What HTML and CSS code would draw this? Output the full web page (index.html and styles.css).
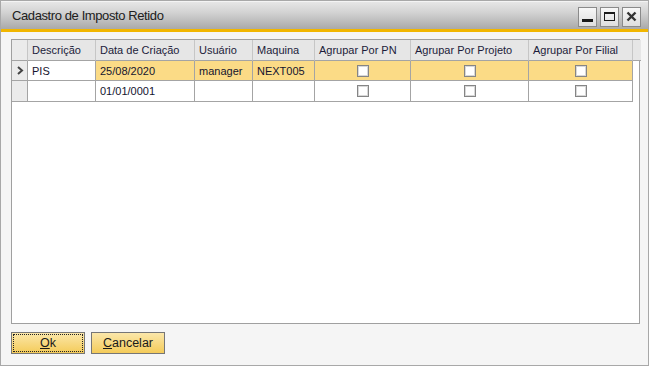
FILE: index.html
```html
<!DOCTYPE html>
<html lang="pt">
<head>
<meta charset="utf-8">
<title>Cadastro de Imposto Retido</title>
<link rel="stylesheet" href="styles.css">
</head>
<body>
<div class="window">
  <div class="titlebar">
    <span class="title">Cadastro de Imposto Retido</span>
    <div class="controls">
      <span class="ctl"><svg width="13" height="13" viewBox="0 0 13 13"><rect x="1" y="9" width="11" height="3" fill="#1a1a1a"/></svg></span>
      <span class="ctl"><svg width="13" height="13" viewBox="0 0 13 13"><rect x="1.5" y="2.5" width="10" height="8" fill="none" stroke="#1a1a1a"/><rect x="1" y="2" width="11" height="2" fill="#1a1a1a"/></svg></span>
      <span class="ctl"><svg width="13" height="13" viewBox="0 0 13 13"><path d="M2.5 2.5 L10.5 10.5 M10.5 2.5 L2.5 10.5" stroke="#333" stroke-width="2.4"/></svg></span>
    </div>
  </div>
  <div class="body">
    <div class="grid">
      <div class="row head">
        <div class="cell rh"></div>
        <div class="cell">Descrição</div>
        <div class="cell">Data de Criação</div>
        <div class="cell">Usuário</div>
        <div class="cell">Maquina</div>
        <div class="cell">Agrupar Por PN</div>
        <div class="cell">Agrupar Por Projeto</div>
        <div class="cell">Agrupar Por Filial</div>
        <div class="cell tail"></div>
      </div>
      <div class="row sel">
        <div class="cell rh"><svg width="8" height="9" viewBox="0 0 8 9"><path d="M2 1 L6 4.5 L2 8" fill="none" stroke="#444" stroke-width="2"/></svg></div>
        <div class="cell white">PIS</div>
        <div class="cell">25/08/2020</div>
        <div class="cell">manager</div>
        <div class="cell">NEXT005</div>
        <div class="cell chk"><span class="box"></span></div>
        <div class="cell chk"><span class="box"></span></div>
        <div class="cell chk"><span class="box"></span></div>
      </div>
      <div class="row">
        <div class="cell rh"></div>
        <div class="cell"></div>
        <div class="cell">01/01/0001</div>
        <div class="cell"></div>
        <div class="cell"></div>
        <div class="cell chk"><span class="box"></span></div>
        <div class="cell chk"><span class="box"></span></div>
        <div class="cell chk"><span class="box"></span></div>
      </div>
    </div>
    <div class="actions">
      <button class="btn focus"><span class="focusring"><u>O</u>k</span></button>
      <button class="btn"><span class="focusring none"><u>C</u>ancelar</span></button>
    </div>
  </div>
</div>
</body>
</html>
```

FILE: styles.css
```css
html, body {
  margin: 0;
  padding: 0;
  background: #ffffff;
}
body {
  font-family: "Liberation Sans", Arial, sans-serif;
  font-size: 12px;
  color: #1a1a1a;
}
.window {
  width: 649px;
  height: 366px;
  box-sizing: border-box;
  border: 1px solid #a8a8a8;
  background: #f5f5f5;
  display: flex;
  flex-direction: column;
  box-shadow: 0 2px 0 -1px #bdbdbd;
}
.titlebar {
  height: 27px;
  border-bottom: 3px solid #f1b600;
  background: linear-gradient(#e6e6e6, #d2d2d2 40%, #a9a9a9);
  display: flex;
  align-items: center;
  justify-content: space-between;
  padding: 0 7px 0 11px;
  border-top: 1px solid #f4f4f4;
}
.title {
  font-size: 13px;
  color: #202020;
  letter-spacing: -0.4px;
}
.controls {
  display: flex;
  gap: 3px;
  margin-top: 2px;
}
.ctl {
  width: 19px;
  height: 20px;
  box-sizing: border-box;
  border: 1px solid #8a8a8a;
  background: linear-gradient(#f7f7f7, #dedede);
  display: flex;
  align-items: center;
  justify-content: center;
}
.body {
  flex: 1;
  padding: 7px 9px 0 10px;
  display: flex;
  flex-direction: column;
}
.grid {
  width: 629px;
  height: 285px;
  box-sizing: border-box;
  border: 1px solid #a0a0a0;
  background: #ffffff;
}
.row {
  display: grid;
  grid-template-columns: 16px 68px 99px 58px 62px 96px 118px 104px 6px;
  height: 21px;
}
.row.sel {
  height: 20px;
}
.cell {
  box-sizing: border-box;
  border-right: 1px solid #a4a4a4;
  border-bottom: 1px solid #a4a4a4;
  padding: 0 4px;
  display: flex;
  align-items: center;
  white-space: nowrap;
  overflow: hidden;
  font-size: 11px;
  color: #14142e;
}
.head .cell {
  background: #e6e6e6;
  border-right-color: #c6c6c6;
  border-bottom-color: #a4a4a4;
  color: #1c1c3a;
}
.head .cell.tail {
  border-right: none;
}
.cell.rh {
  background: #ebebeb;
  padding: 0;
  justify-content: center;
}
.sel .cell {
  background: #fbdb86;
}
.sel .cell.rh {
  background: #ebebeb;
}
.sel .cell.white {
  background: #ffffff;
}
.cell.chk {
  justify-content: center;
}
.box {
  width: 12px;
  height: 12px;
  box-sizing: border-box;
  border: 1px solid #858585;
  background: #ffffff;
  box-shadow: inset 0 0 0 1px #d8d8d8;
}
.actions {
  display: flex;
  gap: 6px;
  margin-top: 8px;
}
.btn {
  width: 74px;
  height: 22px;
  box-sizing: border-box;
  border: 1px solid #767676;
  background: linear-gradient(#fbe7aa, #f4cb59);
  font-family: "Liberation Sans", Arial, sans-serif;
  font-size: 12.5px;
  color: #1a1a1a;
  padding: 1px;
  display: flex;
}
.focusring {
  flex: 1;
  display: flex;
  align-items: center;
  justify-content: center;
  border: 1px dotted #222;
}
.focusring.none {
  border-color: transparent;
}
```
